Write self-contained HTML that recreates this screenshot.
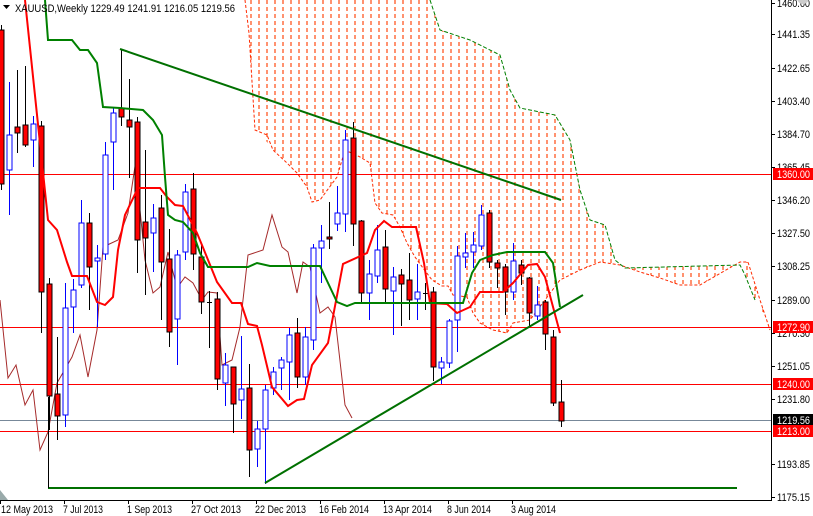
<!DOCTYPE html>
<html><head><meta charset="utf-8"><style>
html,body{margin:0;padding:0;background:#fff;}
#c{position:relative;width:813px;height:516px;overflow:hidden;font-family:"Liberation Sans",sans-serif;}
svg{position:absolute;left:0;top:0}
</style></head><body><div id="c">
<svg id="s" width="813" height="516" xmlns="http://www.w3.org/2000/svg">
<defs>
<pattern id="hatch" x="2" y="0" width="8" height="7" patternUnits="userSpaceOnUse">
<line x1="1" y1="0" x2="1" y2="4" stroke="#ff4a10" stroke-width="1.2"/>
</pattern>
</defs>
<rect width="813" height="516" fill="#fff"/>
<polygon fill="url(#hatch)" points="245,0 430,0 440,30 470,40 500,55 510,90 520,108 555,115 570,140 580,190 590,220 605,225 615,260 625,268 740,265 745,275 755,300 770,325 770,330 760,300 748,262 740,262 700,285 680,285 660,278 640,272 620,265 600,262 580,270 560,280 545,300 530,320 513,323 507,333 493,330 480,323 473,313 467,297 453,295 448,286 442,286 432,280 423,268 415,257 407,243 400,227 393,215 382,213 375,203 370,163 360,157 345,150 337,177 320,200 312,202 307,187 297,173 287,163 273,150 260,133 255,130 249,33"/>
<polyline fill="none" stroke="#ff2a00" stroke-width="1" stroke-dasharray="3,2" points="245,0 249,33 255,130 267,135 273,150 287,163 297,173 307,187 312,202 320,200 337,177 345,150 360,157 370,163 375,203 382,213 393,215 400,227 407,243 415,257 423,268 432,280 442,286 448,286 453,295 467,297 473,313 480,323 493,330 507,333 513,323 530,320 545,300 560,280 580,270 600,262 620,265 640,272 660,278 680,285 700,285 740,262 748,262 760,300 770,330"/>
<polyline fill="none" stroke="#008000" stroke-width="1" stroke-dasharray="4,2" points="430,0 440,30 470,40 500,55 510,90 520,108 555,115 570,140 580,190 590,220 605,225 615,260 625,268 740,265 745,275 755,300"/>
<line x1="0" y1="174.5" x2="771" y2="174.5" stroke="#ff0000"/>
<line x1="0" y1="327.5" x2="771" y2="327.5" stroke="#ff0000"/>
<line x1="0" y1="384.5" x2="771" y2="384.5" stroke="#ff0000"/>
<line x1="0" y1="420.5" x2="771" y2="420.5" stroke="#778899"/>
<line x1="0" y1="431.5" x2="771" y2="431.5" stroke="#ff0000"/>
<polyline fill="none" stroke="#a52a2a" stroke-width="1" points="0,300 8,378 16,365 25,405 33,390 40,450 48,432 57,383 72,357 80,335 88,377 97,330 103,247 118,240 128,213 137,153 140,210 145,260 153,293 160,287 168,252 177,288 185,277 193,283 202,300 208,292 217,293 222,365 232,360 240,327 248,255 263,250 272,215 282,247 288,252 297,293 303,262 310,267 320,313 328,307 335,317 345,405 352,418"/>
<g id="cand"></g>
<polyline fill="none" stroke="#ff0000" stroke-width="2" points="25,0 48,220 57,230 67,262 72,276 87,276 97,302 105,305 113,297 118,250 125,215 138,188 160,188 167,197 175,205 183,206 197,233 204,250 217,282 232,303 241,303 248,324 257,326 262,345 272,387 288,406 297,400 304,399 312,365 328,343 343,264 367,253 375,230 384,221 392,227 416,227 424,263 430,303 447,304 457,313 470,307 480,292 503,292 513,283 528,265 537,264 545,277 560,333"/>
<polyline fill="none" stroke="#008000" stroke-width="2" points="45,0 48,40 72,40 80,50 88,50 97,63 103,107 120,108 143,110 153,120 162,135 165,177 168,215 175,220 183,222 193,233 200,253 208,267 248,267 257,263 270,266 320,266 337,302 347,306 355,303 463,303 472,273 480,260 493,255 507,252 545,252 553,263 560,307"/>
<line x1="120" y1="49" x2="561" y2="200" stroke="#007000" stroke-width="2"/>
<line x1="265" y1="483" x2="583" y2="295" stroke="#007000" stroke-width="2"/>
<line x1="48" y1="488" x2="737" y2="488" stroke="#007000" stroke-width="2"/>
<line x1="48.5" y1="397" x2="48.5" y2="488" stroke="#000"/>
<line x1="771.5" y1="0" x2="771.5" y2="500" stroke="#000"/>
<line x1="0" y1="500.5" x2="772" y2="500.5" stroke="#000"/>
<polygon points="0,490 0,500 8,500" fill="#9aa"/>
<g id="ax" font-size="11" fill="#000"></g>
<text x="15" y="12" font-size="11" fill="#000" textLength="220" lengthAdjust="spacingAndGlyphs">XAUUSD,Weekly  1229.49 1241.91 1216.05 1219.56</text>
<polygon points="3,5 10,5 6.5,9" fill="#000"/>
<circle cx="803" cy="-2" r="6" fill="#ccc"/>
</svg></div>
<script>
var D=[
['r',30,184,25,190],['b',135,170,82,215],['r',127,133,70,153],['r',125,145,66,147],['b',124,140,116,167],
['r',126,292,121,333],['r',284,396,278,430],['r',394,416,337,440],['b',308,415,283,427],['b',290,307,279,333],
['b',223,285,200,288],['r',223,267,213,310],['b',258,261,245,327],['b',155,254,142,260],['b',113,142,108,190],
['r',108,117,49,126],['r',120,127,79,178],['r',122,240,117,273],['r',222,238,150,295],['b',218,233,204,272],
['r',208,262,195,320],['r',259,332,229,347],['b',255,319,250,365],['b',192,252,184,260],['r',189,254,173,270],
['r',257,302,245,314],['d',302,302,291,348],['r',299,379,292,390],['b',365,383,353,406],['r',367,404,367,433],
['b',389,400,336,419],['r',388,450,364,477],['b',429,449,421,467],['b',390,429,385,484],['b',372,388,367,395],
['b',360,368,357,390],['b',335,362,328,400],['r',333,377,318,388],['b',337,377,327,385],['b',248,340,244,350],
['b',241,248,225,283],['r',237,239,202,249],['b',213,224,186,231],['b',140,214,130,232],['r',138,224,122,246],
['r',221,293,220,302],['b',274,293,260,320],['b',250,276,225,283],['r',247,289,230,304],['b',277,291,267,335],
['r',275,284,269,326],['r',280,300,253,320],['b',292,299,264,320],['d',293,293,283,310],['r',292,367,287,381],
['b',362,368,357,384],['b',321,363,319,368],['b',256,320,246,352],['b',253,257,233,268],['b',245,252,232,268],
['b',215,246,205,250],['r',213,262,210,268],['r',263,268,260,288],['r',267,292,264,315],['b',261,292,243,300],
['r',265,273,260,285],['r',278,313,277,327],['b',305,316,286,320],['r',302,334,300,350],['r',337,403,330,406],
['r',402,421,380,427]];
var g=document.getElementById('cand'),h='';
D.forEach(function(d,i){var x=1+8*i;var col=d[0]=='b'?'#0000ff':'#000';
h+='<line x1="'+(x+.5)+'" y1="'+d[3]+'" x2="'+(x+.5)+'" y2="'+d[4]+'" stroke="'+col+'"/>';
if(d[0]=='d'){h+='<line x1="'+(x-2)+'" y1="'+d[1]+'.5" x2="'+(x+3)+'" y2="'+d[1]+'.5" stroke="#000"/>';return;}
var ht=Math.max(d[2]-d[1],2);
if(d[0]=='r')h+='<rect x="'+(x-2)+'" y="'+d[1]+'" width="5" height="'+ht+'" fill="#ff0000" stroke="#000"/>';
else h+='<rect x="'+(x-2)+'" y="'+d[1]+'" width="5" height="'+ht+'" fill="#fff" stroke="#0000ff"/>';});
g.innerHTML=h;
var L=[['1460.60',3],['1441.35',34],['1422.65',68],['1403.40',101],['1384.70',134],['1365.45',167],['1346.20',200],['1327.50',233],['1308.25',266],['1289.00',300],['1270.30',333],['1251.05',366],['1231.80',399],['1193.85',464],['1175.15',497]];
var a='';L.forEach(function(l){a+='<line x1="771" y1="'+(l[1]+.5)+'" x2="775" y2="'+(l[1]+.5)+'" stroke="#000"/><text x="777" y="'+(l[1]+4)+'" textLength="33" lengthAdjust="spacingAndGlyphs">'+l[0]+'</text>';});
var B=[['1360.00',174,'#ff0000'],['1272.90',327,'#ff0000'],['1240.00',384,'#ff0000'],['1219.56',420,'#000'],['1213.00',431,'#ff0000']];
B.forEach(function(b){a+='<rect x="773" y="'+(b[1]-6)+'" width="40" height="12" fill="'+b[2]+'"/><text x="777" y="'+(b[1]+4)+'" fill="#fff" textLength="33" lengthAdjust="spacingAndGlyphs">'+b[0]+'</text>';});
var T=[['12 May 2013',0,52],['7 Jul 2013',64,40],['1 Sep 2013',128,45],['27 Oct 2013',192,50],['22 Dec 2013',256,51],['16 Feb 2014',320,50],['13 Apr 2014',384,49],['8 Jun 2014',448,44],['3 Aug 2014',512,45]];
T.forEach(function(t){a+='<line x1="'+(t[1]+.5)+'" y1="500" x2="'+(t[1]+.5)+'" y2="504" stroke="#000"/><text x="'+(t[1]?t[1]-1:1)+'" y="513" textLength="'+t[2]+'" lengthAdjust="spacingAndGlyphs">'+t[0]+'</text>';});
document.getElementById('ax').innerHTML=a;
</script>
</body></html>
